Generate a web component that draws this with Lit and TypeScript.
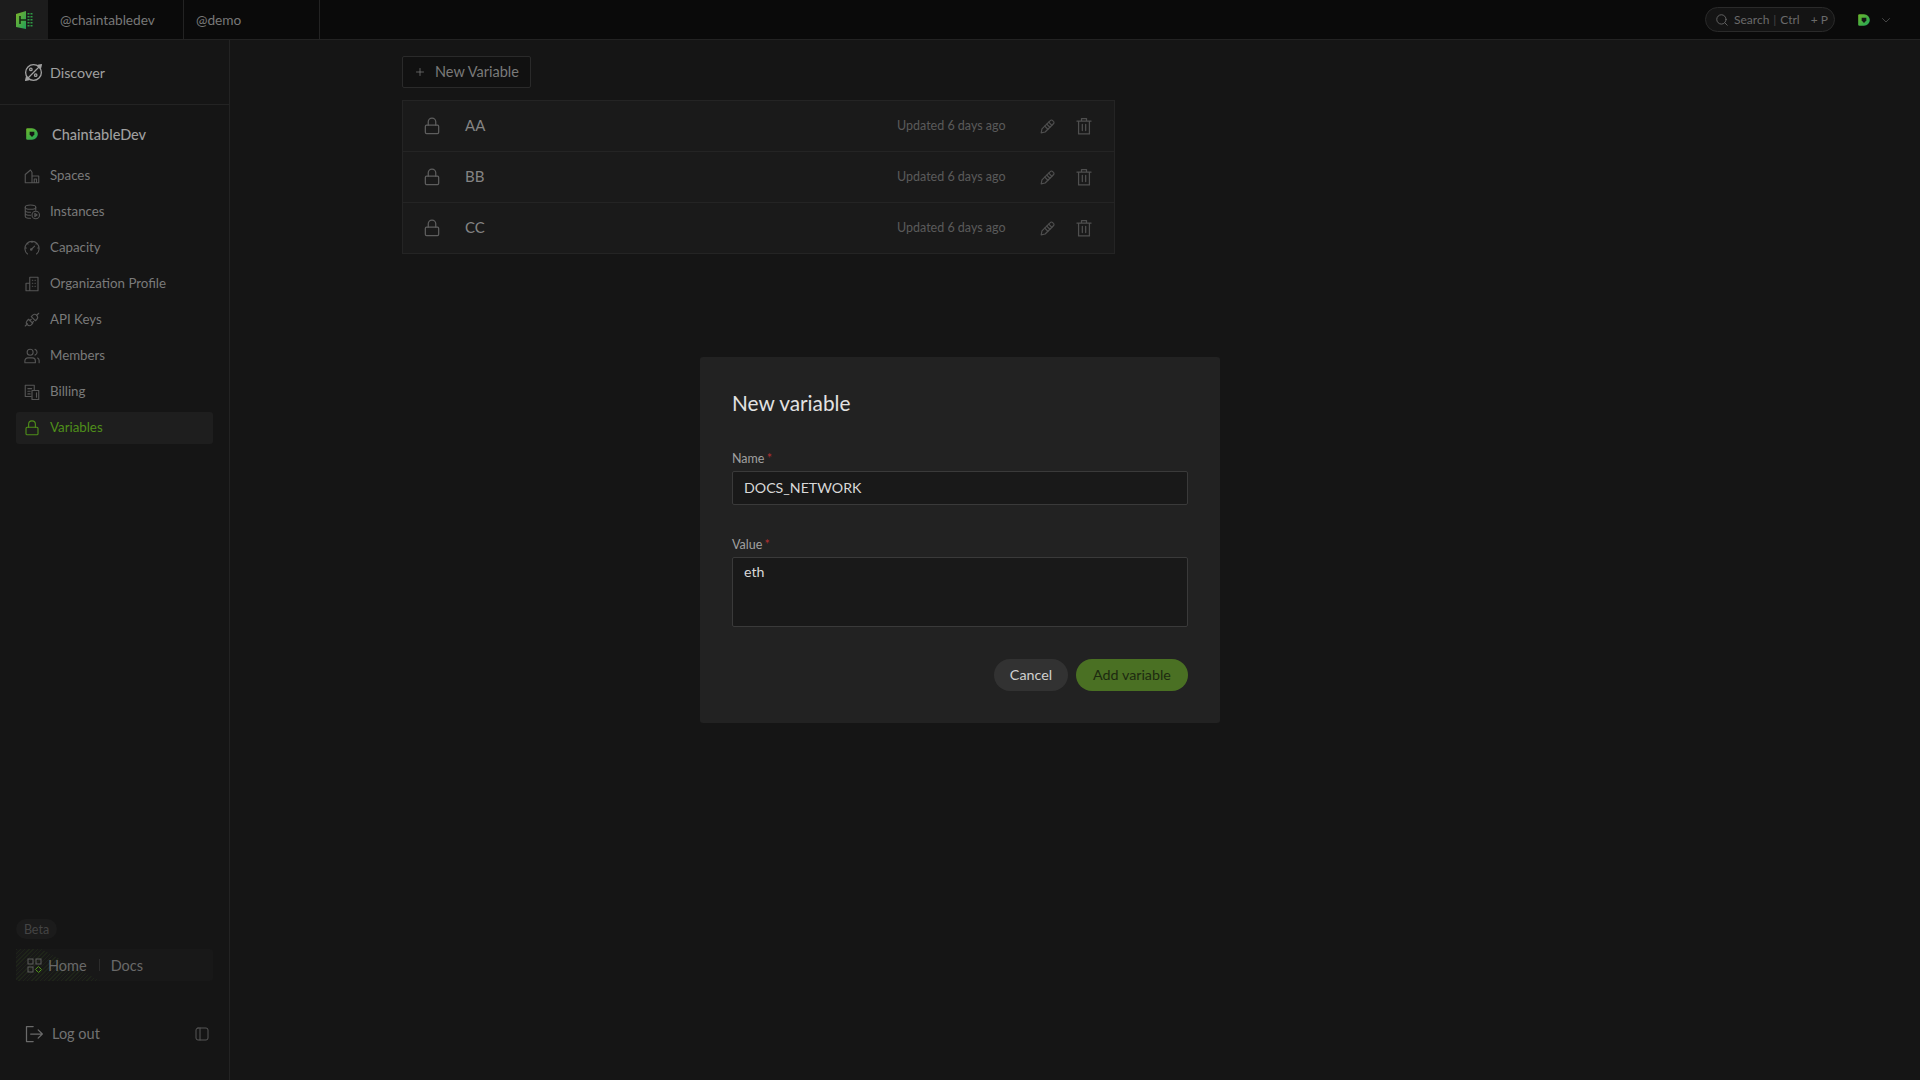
import { LitElement, html, css, svg } from "lit";
import { customElement } from "lit/decorators.js";

const I = (w: number, body: unknown, cls = "") => html`<svg class="ic ${cls}" width=${w} height=${w} viewBox="0 0 24 24" fill="none" stroke="currentColor" stroke-width="1.5" stroke-linecap="round" stroke-linejoin="round">${body}</svg>`;

const lock = svg`<path d="M7.500 11V7a4.500 4.500 0 0 1 9 0v4"/><rect x="4" y="11" width="16" height="10" rx="1.500"/>`;
const pencil = svg`<path d="M4 20l1-5L15.500 4.500a2 2 0 0 1 3 0l1 1a2 2 0 0 1 0 3L9 19z"/><path d="M13.500 6.500l4 4M11 9l4 4M8.500 11.500l4 4"/>`;
const trash = svg`<path d="M3.500 6h17M9 6V3h6v3M5.500 6v15.500h13V6M10 10v7.500M14 10v7.500"/>`;
const spaces = svg`<path d="M3 21V10l7-6 2 3v14M3 21h18v-9h-9M15 21v-5h3v5"/>`;
const instances = svg`<ellipse cx="10" cy="5.500" rx="7" ry="2.800"/><path d="M3 5.500v12c0 1.500 3 2.800 7 2.800M17 5.500v4M3 9.500c0 1.500 3 2.800 7 2.800M3 13.500c0 1.500 3 2.800 7 2.800"/><circle cx="17" cy="16" r="5"/><path d="M15.800 13.800l3 2.200-3 2.200z"/>`;
const capacity = svg`<path d="M6 20a9.500 9.500 0 1 1 12 0M2.800 12H4.500M19.500 12h1.700M12 2.800v1.700M5.500 5.500l1.200 1.200M18.500 5.500l-1.200 1.200"/><path d="M11 14l4.500-4.500"/><circle cx="11" cy="14" r="1"/>`;
const org = svg`<path d="M9 21V3h11v18H9zM9 11H4v10h5M12.500 7h.5M16 7h.5M12.500 11h.5M16 11h.5M12.500 15h.5M16 15h.5"/>`;
const keys = svg`<path d="M3 20l3-3M18 6l3-3M7.500 11l5.500 5.500-2 2a3.900 3.900 0 0 1-5.500-5.500zM11 7.500l5.500 5.500 2-2A3.900 3.900 0 0 0 13 5.500zM9 13l2-2M12 16l2-2"/>`;
const members = svg`<circle cx="9.500" cy="7" r="4"/><path d="M2.500 21v-2.500a4 4 0 0 1 4-4h6a4 4 0 0 1 4 4V21zM16 3.200a4 4 0 0 1 0 7.600M21.500 21v-3a4 4 0 0 0-2-3.300"/>`;
const billing = svg`<path d="M11 18H3V3h12v7M6.500 7.500h5M6.500 11h3M6.500 14.500h3"/><path d="M12 10h9v12h-9zM18 13v6"/>`;
const discover = svg`<circle cx="12" cy="12" r="9"/><path d="M3.500 20.500L21 3M16 8l-4 4M4 17l-1 4 4-1M20 7l1-4-4 1"/><circle cx="9" cy="8.500" r="1.400"/><circle cx="14.500" cy="15" r="1.400"/>`;
const logoutI = svg`<path d="M11 3H3v18h8M8 12h14M17 7l5 5-5 5"/>`;
const panel = svg`<rect x="3" y="3" width="18" height="18" rx="3"/><path d="M9 3v18"/>`;
const search = svg`<circle cx="11" cy="11" r="8"/><path d="M17 17l4 4"/>`;
const chevron = svg`<path d="M5 9l7 7 7-7"/>`;
const plus = svg`<path d="M12 5v14M5 12h14"/>`;

const orgMark = (w: number, id: string) => html`<svg class="ic" width=${w} height=${w} viewBox="0 0 24 24"><defs><linearGradient id=${id} x1="0" y1="0" x2="1" y2="1"><stop offset="0" stop-color="#6db52a"/><stop offset="1" stop-color="#1fa65a"/></linearGradient></defs><path fill="url(#${id})" d="M2 3l2-1h8a10 10 0 0 1 0 20H4l-2-1z"/><path fill="#151515" d="M8 8h8v5l-4 4-4-4z"/></svg>`;

const nav: [string, unknown][] = [
  ["Spaces", spaces], ["Instances", instances], ["Capacity", capacity], ["Organization Profile", org],
  ["API Keys", keys], ["Members", members], ["Billing", billing],
];

@customElement("app-root")
export class AppRoot extends LitElement {
  static styles = css`
    :host { display: block; height: 100vh; overflow: hidden; position: relative; background: #151515; font-family: "Lato", "Open Sans", sans-serif; color: #8a8a8a; font-size: 14px; }
    .ic { display: block; flex: none; }
    .top { height: 39px; display: flex; background: #0a0a0a; border-bottom: 1px solid #232323; }
    .logo { width: 48px; background: #1c1c1c; display: flex; align-items: center; justify-content: center; padding-left: 1px; box-sizing: border-box; }
    .tab { width: 136px; padding-left: 12px; box-sizing: border-box; display: flex; align-items: center; border-right: 1px solid #232323; color: #787878; font-size: 13.700px; }
    .spacer { flex: 1; }
    .search { align-self: center; width: 130px; height: 25px; box-sizing: border-box; border: 1px solid #2a2a2a; border-radius: 13px; background: #141414; display: flex; align-items: center; gap: 5px; padding-left: 9px; color: #6a6a6a; font-size: 12px; }
    .search .sep { color: #444; margin: 0 -1px; }
    .search .plus { margin-left: 6px; }
    .acct { display: flex; align-items: center; gap: 9px; width: 85px; padding-left: 22px; box-sizing: border-box; color: #5a5a5a; }
    .body { display: flex; height: 1040px; }
    .side { width: 230px; box-sizing: border-box; border-right: 1px solid #232323; display: flex; flex-direction: column; flex: none; }
    .disc { height: 65px; box-sizing: border-box; border-bottom: 1px solid #232323; display: flex; align-items: center; gap: 6px; padding-left: 23px; color: #a0a0a0; font-size: 14.300px; }
    .disc span { padding-top: 1px; }
    .orgrow { display: flex; align-items: center; gap: 13px; padding: 20px 0 0 25px; height: 18px; color: #9f9f9f; font-weight: 500; font-size: 14.500px; box-sizing: content-box; margin-bottom: 15px; }
    .list { display: flex; flex-direction: column; padding: 0 16px; }
    .item { height: 36px; display: flex; align-items: center; gap: 9px; padding-left: 7px; color: #7a7a7a; font-size: 13.300px; border-radius: 3px; box-sizing: border-box; }
    .item span { margin-bottom: 2px; }
    .item .ic { color: #555; }
    .item.on { height: 32px; margin-top: 2px; background: #1e1e1e; color: #4f8f1a; }
    .item.on .ic { color: #4f8f1a; }
    .foot { margin-top: auto; padding: 0 16px; }
    .beta { display: inline-flex; align-items: center; justify-content: center; width: 41px; height: 20px; border-radius: 10px; background: #1b1b1b; color: #444; font-size: 12.500px; }
    .links { position: relative; margin-top: 10px; height: 32px; display: flex; align-items: center; border-radius: 3px; background: #181818; color: #696969; font-size: 14.500px; padding-left: 11px; gap: 6px; }
    .links::before { content: ""; position: absolute; left: 0; top: 0; bottom: 0; width: 84px; clip-path: polygon(0 0, 30% 0, 100% 100%, 0 100%); background: repeating-linear-gradient(135deg, #1e2419 0 1px, transparent 1px 3px); }
    .links > * { position: relative; }
    .links .div { width: 1px; height: 12px; background: #2c2c2c; margin: 0 5px 0 6px; }
    .links .ic { color: #5c5c5c; }
    .out { display: flex; align-items: center; gap: 8px; margin-top: 42px; margin-bottom: 35px; padding-left: 8px; height: 22px; color: #727272; font-size: 14.500px; }
    .out span { margin-bottom: 1px; }
    .out .ic:last-child { margin-left: auto; margin-right: 3px; color: #565656; }
    .out .ic { color: #6a6a6a; }
    .main { flex: 1; padding: 16px 0 0 172px; }
    .newb { width: 129px; height: 32px; box-sizing: border-box; border: 1px solid #2a2a2a; border-radius: 2px; background: #111; display: flex; align-items: center; gap: 9px; padding-left: 11px; color: #7a7a7a; font-size: 14.500px; margin-bottom: 12px; }
    .newb span { margin-bottom: 1px; }
    .vars { width: 713px; border: 1px solid #242424; background: #1a1a1a; box-sizing: border-box; }
    .row { height: 51px; box-sizing: border-box; display: flex; align-items: center; border-bottom: 1px solid #242424; padding-left: 19px; }
    .row:last-child { border-bottom: 0; height: 50px; }
    .row .lk { color: #5e5e5e; margin-right: 23px; }
    .row .nm { flex: 1; color: #848484; font-size: 15px; margin-bottom: 2px; }
    .row .upd { color: #5a5a5a; font-size: 12.500px; width: 141px; margin-bottom: 2px; }
    .row .act { color: #4f4f4f; margin-right: 17px; }
    .row .act.t { margin-right: 20px; }
    .overlay { position: absolute; inset: 0; display: flex; align-items: center; justify-content: center; }
    .modal { width: 520px; height: 366px; box-sizing: border-box; background: #222222; border-radius: 3px; padding: 32px; display: flex; flex-direction: column; }
    h2 { margin: 0 0 34px; font-size: 20.800px; font-weight: 400; line-height: 28px; color: #e2e2e2; }
    label { display: block; font-size: 12.500px; line-height: 16px; color: #a0a0a0; margin-bottom: 4px; }
    label b { color: #b03030; font-weight: 400; margin-left: -1px; }
    .fld { box-sizing: border-box; width: 456px; border: 1px solid #3a3a3a; border-radius: 2px; background: #191919; color: #d8d8d8; font-size: 14.200px; padding: 0 11px; display: flex; align-items: center; }
    .in { height: 34px; margin-bottom: 32px; padding-bottom: 2px; }
    .ta { height: 70px; align-items: flex-start; padding-top: 5px; }
    .btns { display: flex; justify-content: flex-end; gap: 8px; margin-top: 32px; }
    .btn { height: 32px; border-radius: 16px; display: flex; align-items: center; justify-content: center; font-size: 14.300px; }
    .btn span { margin-bottom: 1px; }
    .cancel { width: 74px; background: #323232; color: #d0d0d0; }
    .add { width: 112px; background: #4a7023; color: #1d2a10; }
  `;

  render() {
    return html`
      <div class="top">
        <div class="logo"><svg width="20" height="20" viewBox="0 0 20 20"><defs><linearGradient id="lg" x1="0" y1="0" x2="1" y2="1"><stop offset="0" stop-color="#7fb52a"/><stop offset="1" stop-color="#1f9e5a"/></linearGradient></defs><path fill="url(#lg)" d="M1 4l10-3v18l-10-2z"/><path fill="none" stroke="#152b12" stroke-width="1.600" d="M5 6v8M5 10h6"/><path fill="#2f9a45" d="M12.500 3h2v1.500h-2zM15.500 3h2v1.500h-2zM12.500 6h2v1.500h-2zM15.500 6h2v1.500h-2zM12.500 9h2v1.500h-2zM15.500 9h2v1.500h-2zM12.500 12h2v1.500h-2zM15.500 12h2v1.500h-2zM12.500 15h2v1.500h-2zM15.500 15h2v1.500h-2z"/></svg></div>
        <div class="tab">@chaintabledev</div>
        <div class="tab">@demo</div>
        <div class="spacer"></div>
        <div class="search">${I(14, search)}<span>Search</span><span class="sep">|</span><span>Ctrl</span><span class="plus">+ P</span></div>
        <div class="acct">${orgMark(14, "m1")}${I(12, chevron)}</div>
      </div>
      <div class="body">
        <aside class="side">
          <div class="disc">${I(21, discover)}<span>Discover</span></div>
          <div class="orgrow">${orgMark(14, "m2")}<span>ChaintableDev</span></div>
          <div class="list">
            ${nav.map(([t, i]) => html`<div class="item">${I(18, i)}<span>${t}</span></div>`)}
            <div class="item on">${I(18, lock)}<span>Variables</span></div>
          </div>
          <div class="foot">
            <div class="beta">Beta</div>
            <div class="links">
              <svg class="ic" width="15" height="15" viewBox="0 0 15 15" fill="none" stroke="currentColor"><rect x="1" y="1" width="5" height="5"/><rect x="9" y="1" width="5" height="5"/><rect x="1" y="9" width="5" height="5"/><path stroke="#4f8f1a" d="M11.500 8.500l3 3-3 3-3-3z"/></svg>
              <span>Home</span><span class="div"></span><span>Docs</span>
            </div>
            <div class="out">${I(20, logoutI)}<span>Log out</span>${I(16, panel)}</div>
          </div>
        </aside>
        <main class="main">
          <div class="newb">${I(12, plus)}<span>New Variable</span></div>
          <div class="vars">
            ${["AA", "BB", "CC"].map((n) => html`<div class="row">${I(20, lock, "lk")}<span class="nm">${n}</span><span class="upd">Updated 6 days ago</span>${I(19, pencil, "act")}${I(20, trash, "act t")}</div>`)}
          </div>
        </main>
      </div>
      <div class="overlay">
        <div class="modal">
          <h2>New variable</h2>
          <label>Name <b>*</b></label>
          <div class="fld in">DOCS_NETWORK</div>
          <label>Value <b>*</b></label>
          <div class="fld ta">eth</div>
          <div class="btns"><div class="btn cancel"><span>Cancel</span></div><div class="btn add"><span>Add variable</span></div></div>
        </div>
      </div>
    `;
  }
}
